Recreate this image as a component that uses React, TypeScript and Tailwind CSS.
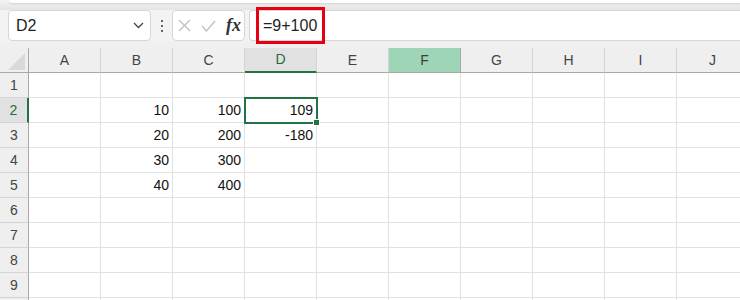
import React from "react";

const cols = ["A", "B", "C", "D", "E", "F", "G", "H", "I", "J"];

// row -> column -> value
const data: Record<number, Record<string, string>> = {
  2: { B: "10", C: "100", D: "109" },
  3: { B: "20", C: "200", D: "-180" },
  4: { B: "30", C: "300" },
  5: { B: "40", C: "400" },
};

const font = { fontFamily: '"Liberation Sans", "Noto Sans CJK JP", sans-serif' };

function ColumnHeader({ name }: { name: string }) {
  const active = name === "D";
  const hover = name === "F";
  return (
    <div
      className={`h-[25px] flex items-center justify-center text-[14px] border-r border-b ${
        active
          ? "bg-[#e1e1e1] text-[#1e6b40] border-r-[#d4d4d4] border-b-[#217346] border-b-2"
          : hover
          ? "bg-[#9fd5b7] text-[#3d3d3d] border-r-[#a8a8a8] border-b-[#a8a8a8]"
          : "bg-[#efefef] text-[#444] border-r-[#d4d4d4] border-b-[#a8a8a8]"
      }`}
    >
      {name}
    </div>
  );
}

function RowHeader({ n }: { n: number }) {
  const active = n === 2;
  return (
    <div
      className={`h-[25px] flex items-center justify-center text-[14px] border-b ${
        active
          ? "bg-[#e1e1e1] text-[#1e6b40] border-r-2 border-r-[#217346] border-b-[#d4d4d4]"
          : "bg-[#efefef] text-[#444] border-r border-r-[#a8a8a8] border-b-[#d4d4d4]"
      }`}
    >
      {/* row 10 is only a sliver at the bottom edge, label not visible */}
      {n < 10 ? n : null}
    </div>
  );
}

export default function App() {
  const rows = Array.from({ length: 10 }, (_, i) => i + 1);

  return (
    <div className="w-[740px] h-[300px] overflow-hidden bg-[#f0f0f0] text-[#222]" style={font}>
      {/* ribbon bottom edge */}
      <div className="h-[10px] bg-gradient-to-b from-[#f3f3f3] to-[#e4e4e4]">
        <div className="h-[3px] ml-[9px] bg-white rounded-bl-md shadow-[0_1px_2px_rgba(0,0,0,0.12)]" />
      </div>

      {/* formula bar */}
      <div className="flex h-[31px] bg-[#f3f3f3]">
        <div className="ml-[8px] w-[143px] h-[31px] bg-white border border-[#d6d6d6] rounded flex items-center justify-between pl-[7px] pr-[6px] text-[16px] text-[#1f1f1f]">
          <span>D2</span>
          <svg width="11" height="7" viewBox="0 0 11 7" fill="none">
            <path d="M1 1l4.5 4.5L10 1" stroke="#444" strokeWidth="1.3" />
          </svg>
        </div>
        <div className="w-[21px] flex flex-col items-center justify-center gap-[3px]">
          <span className="w-[2px] h-[2px] bg-[#333] rounded-full" />
          <span className="w-[2px] h-[2px] bg-[#333] rounded-full" />
          <span className="w-[2px] h-[2px] bg-[#333] rounded-full" />
        </div>
        <div className="w-[73px] h-[31px] bg-white border border-[#d6d6d6] rounded flex items-center pl-[5px] gap-[10px]">
          <svg width="13" height="13" viewBox="0 0 13 13" fill="none">
            <path d="M1 1l11 11M12 1L1 12" stroke="#bdbdbd" strokeWidth="1.2" />
          </svg>
          <svg width="15" height="12" viewBox="0 0 15 12" fill="none">
            <path d="M1 6l4.5 5L14 1" stroke="#bdbdbd" strokeWidth="1.2" />
          </svg>
          <span
            className="text-[18px] italic font-bold text-[#333] leading-none -mt-[2px]"
            style={{ fontFamily: '"Liberation Serif", serif' }}
          >
            fx
          </span>
        </div>
        <div className="relative ml-[4px] flex-1 h-[31px] bg-white border-y border-l border-[#d6d6d6] rounded-l flex items-center pl-[13px] text-[16px] text-[#1f1f1f]">
          =9+100
          <div className="absolute -top-[4px] left-[6px] w-[69px] h-[37px] border-[3px] border-[#e60012]" />
        </div>
      </div>

      <div className="h-[7px]" />

      {/* grid */}
      <div className="grid grid-cols-[29px_repeat(10,72px)] text-[14px]">
        <div className="h-[25px] bg-[#efefef] border-r border-b border-[#a8a8a8] flex items-end justify-end pr-[3px] pb-[2px]">
          <svg width="17" height="17" viewBox="0 0 17 17">
            <path d="M17 0V17H0Z" fill="#d9d9d9" />
          </svg>
        </div>
        {cols.map((c) => (
          <ColumnHeader key={c} name={c} />
        ))}

        {rows.map((r) => (
          <React.Fragment key={r}>
            <RowHeader n={r} />
            {cols.map((c) => {
              const v = data[r]?.[c];
              const selected = r === 2 && c === "D";
              return (
                <div
                  key={c}
                  className={`relative h-[25px] bg-white border-r border-b border-[#e1e1e1] flex items-center justify-end pr-[3px] text-[#111] ${
                    selected ? "z-10" : ""
                  }`}
                >
                  {v}
                  {selected && (
                    <>
                      <div className="absolute -left-[1px] -top-[1px] w-[74px] h-[27px] border-2 border-[#217346]" />
                      <div className="absolute -right-[4px] -bottom-[4px] w-[7px] h-[7px] bg-[#217346] border border-white" />
                    </>
                  )}
                </div>
              );
            })}
          </React.Fragment>
        ))}
      </div>
    </div>
  );
}
